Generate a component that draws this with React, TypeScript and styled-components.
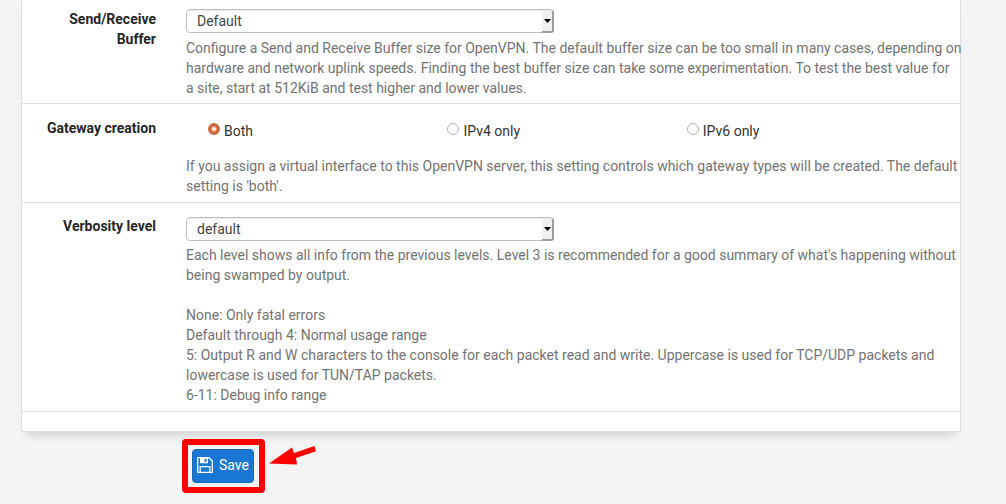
import React from "react";
import styled, { createGlobalStyle } from "styled-components";

const GlobalStyle = createGlobalStyle`
  *, *::before, *::after { box-sizing: border-box; }
  body {
    margin: 0;
    background: #f4f4f4;
    color: #333;
    font: 14px/20px Roboto, sans-serif;
  }
`;

const Page = styled.form`
  padding: 0 45px 11px 21px;
`;

const Panel = styled.section`
  background: #fff;
  border: 1px solid #dedede;
  border-top: 0;
  box-shadow: 0 9px 9px -6px rgba(0, 0, 0, 0.16);
`;

const PanelEnd = styled.div`
  height: 19px;
`;

const Row = styled.div<{ $top: number; $bottom: number }>`
  display: flex;
  padding: ${(p) => p.$top}px 0 ${(p) => p.$bottom}px;
  border-bottom: 1px solid #dedede;
`;

const LabelCell = styled.div`
  flex: 0 0 149px;
  padding: 0 15px 0 19px;
  font-weight: 700;
  color: #262626;
  text-align: right;
`;

const Field = styled.div<{ $top?: number }>`
  flex: 1;
  min-width: 0;
  padding: ${(p) => p.$top ?? 0}px 7px 0 15px;
`;

const SelectBox = styled.div`
  position: relative;
  width: 48%;
  height: 24px;
`;

const SelectInput = styled.select`
  appearance: none;
  display: block;
  width: 100%;
  height: 24px;
  padding: 0 20px 0 10px;
  border: 1px solid #bdbdbd;
  border-radius: 4px;
  background: #fff;
  box-shadow: inset 0 1px 1px rgba(0, 0, 0, 0.08);
  color: #444;
  font: inherit;
`;

const SelectArrow = styled.span`
  position: absolute;
  top: 1px;
  right: 0;
  bottom: 0;
  display: flex;
  align-items: center;
  justify-content: center;
  width: 12px;
  border: solid #9c9c9c;
  border-width: 0 2px 2px 0;
  border-radius: 0 3px 3px 0;
  background: #efefef;
  pointer-events: none;
`;

const Help = styled.p<{ $gap: number }>`
  margin: ${(p) => p.$gap}px -9px 0 0;
  color: #737373;
`;

const Radios = styled.div`
  display: grid;
  grid-template-columns: repeat(3, 32%);
  column-gap: 1px;
  padding-left: 22px;
`;

const RadioLabel = styled.label`
  display: flex;
  align-items: center;
  gap: 4px;
  height: 20px;
`;

const RadioInput = styled.input`
  appearance: none;
  width: 12px;
  height: 12px;
  margin: 0 0 4px;
  border: 1px solid #b0b0b0;
  border-radius: 50%;
  background: #fff;

  &:checked {
    border-color: #c4714f;
    background: radial-gradient(circle, #fff 0 1px, #f0c0a9 2px, #dc6b3c 3px, #cf6034 5px);
  }
`;

const Actions = styled.div`
  padding: 17px 0 0 171px;
`;

const Highlight = styled.div`
  position: relative;
  width: max-content;

  &::before {
    content: "";
    position: absolute;
    inset: -10px -11px -10px -10px;
    border: 6px solid #f00;
    border-radius: 4px;
    pointer-events: none;
  }
`;

const SaveButton = styled.button`
  display: flex;
  align-items: center;
  gap: 6px;
  height: 34px;
  padding: 0 4px 2px;
  border: 1px solid #1767b5;
  border-radius: 4px;
  background: #1976d2;
  color: #fff;
  font: inherit;
`;

const Arrow = styled.svg`
  position: absolute;
  top: -4px;
  left: 76px;
`;

type SelectProps = { id: string; value: string };

function Select({ id, value }: SelectProps) {
  return (
    <SelectBox>
      <SelectInput id={id} defaultValue={value}>
        <option>{value}</option>
      </SelectInput>
      <SelectArrow>
        <svg width="7" height="4" viewBox="0 0 7 4" aria-hidden="true">
          <path d="M0 0h7L3.500 4z" fill="#000" />
        </svg>
      </SelectArrow>
    </SelectBox>
  );
}

const gateways = ["Both", "IPv4 only", "IPv6 only"];

export default function App() {
  return (
    <>
      <GlobalStyle />
      <Page onSubmit={(e) => e.preventDefault()}>
        <Panel>
          <Row $top={9} $bottom={5}>
            <LabelCell>
              <label htmlFor="buffer">Send/Receive Buffer</label>
            </LabelCell>
            <Field>
              <Select id="buffer" value="Default" />
              <Help $gap={5}>
                Configure a Send and Receive Buffer size for OpenVPN. The default buffer size can be
                too small in many cases, depending on hardware and network uplink speeds. Finding the
                best buffer size can take some experimentation. To test the best value for
                <br />
                a site, start at 512KiB and test higher and lower values.
              </Help>
            </Field>
          </Row>
          <Row $top={14} $bottom={6}>
            <LabelCell id="gateway">Gateway creation</LabelCell>
            <Field $top={3}>
              <Radios role="radiogroup" aria-labelledby="gateway">
                {gateways.map((name, i) => (
                  <RadioLabel key={name}>
                    <RadioInput type="radio" name="gateway" defaultChecked={i === 0} />
                    {name}
                  </RadioLabel>
                ))}
              </Radios>
              <Help $gap={15}>
                If you assign a virtual interface to this OpenVPN server, this setting controls which
                gateway types will be created. The default setting is 'both'.
              </Help>
            </Field>
          </Row>
          <Row $top={13} $bottom={6}>
            <LabelCell>
              <label htmlFor="verbosity">Verbosity level</label>
            </LabelCell>
            <Field $top={1}>
              <Select id="verbosity" value="default" />
              <Help $gap={4}>
                Each level shows all info from the previous levels. Level 3 is recommended for a good
                summary of what's happening without being swamped by output.
                <br />
                <br />
                None: Only fatal errors
                <br />
                Default through 4: Normal usage range
                <br />
                5: Output R and W characters to the console for each packet read and write. Uppercase
                is used for TCP/UDP packets and lowercase is used for TUN/TAP packets.
                <br />
                6-11: Debug info range
              </Help>
            </Field>
          </Row>
          <PanelEnd />
        </Panel>
        <Actions>
          <Highlight>
            <SaveButton type="submit">
              <svg width="16" height="16" viewBox="0 0 16 16" fill="none" stroke="#fff" aria-hidden="true">
                <path d="M.7.7h11.300l3.300 3.300v11.300H.7z" strokeWidth="1.300" strokeLinejoin="round" />
                <path d="M3.200 15V9.600h9.600V15" strokeWidth="1.200" />
                <path d="M3 .7h8v5.600H3zM7.500 1.700v3.300h2V1.700z" fill="#fff" fillRule="evenodd" stroke="none" />
              </svg>
              Save
            </SaveButton>
            <Arrow width="49" height="22" viewBox="0 0 49 22" aria-hidden="true">
              <path d="M1 18.500 24 2.500l2 5.500L46.500 1 48 6.200 28 13l1 6.500z" fill="#f00" />
            </Arrow>
          </Highlight>
        </Actions>
      </Page>
    </>
  );
}
